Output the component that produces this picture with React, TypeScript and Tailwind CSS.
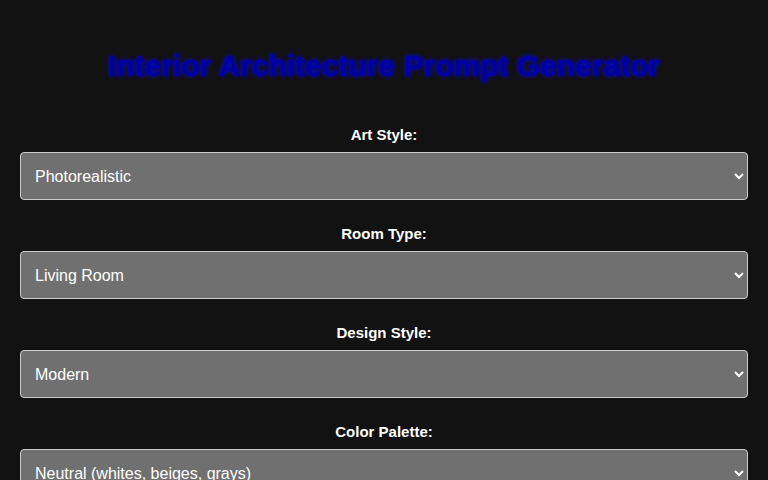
import React from "react";

const fields = [
  { label: "Art Style:", value: "Photorealistic" },
  { label: "Room Type:", value: "Living Room" },
  { label: "Design Style:", value: "Modern" },
  { label: "Color Palette:", value: "Neutral (whites, beiges, grays)" },
];

export default function App() {
  return (
    <div className="min-h-screen bg-[#121212] px-5 pt-[44px] font-['Liberation_Sans',Arial,sans-serif] text-[#eeeeee]">
      <h1 className="mb-[37px] text-center text-[30px] font-bold leading-[44px] text-[#0000a0] [text-shadow:0_0_4px_#0000ff]">
        Interior Architecture Prompt Generator
      </h1>
      {fields.map((f) => (
        <div key={f.label} className="mb-[24px]">
          <label className="mb-[7px] block text-center text-[15px] font-bold leading-5 text-white">{f.label}</label>
          <select
            defaultValue={f.value}
            className="block h-12 w-full rounded border border-[#cccccc] bg-[#707070] px-[10px] text-base text-white outline-none"
          >
            <option>{f.value}</option>
          </select>
        </div>
      ))}
    </div>
  );
}
